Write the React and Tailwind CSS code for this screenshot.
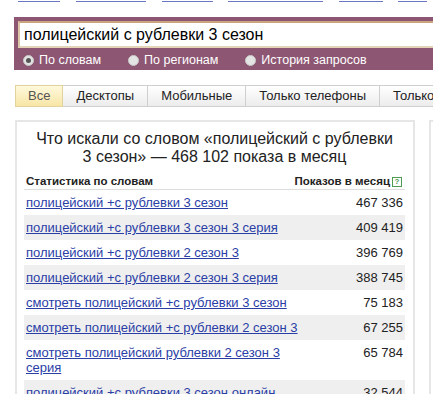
import React from 'react';

const topLinks = [
    { ml: 18, w: 42 },
    { ml: 16, w: 70 },
    { ml: 16, w: 51 },
    { ml: 15, w: 95 },
    { ml: 16, w: 44 },
    { ml: 15, w: 29 },
];

const tabs = ['Все', 'Десктопы', 'Мобильные', 'Только телефоны', 'Только планшеты'];

const rows = [
    ['полицейский +с рублевки 3 сезон', '467 336'],
    ['полицейский +с рублевки 3 сезон 3 серия', '409 419'],
    ['полицейский +с рублевки 2 сезон 3', '396 769'],
    ['полицейский +с рублевки 2 сезон 3 серия', '388 745'],
    ['смотреть полицейский +с рублевки 3 сезон', '75 183'],
    ['смотреть полицейский +с рублевки 2 сезон 3', '67 255'],
    ['смотреть полицейский рублевки 2 сезон 3 серия', '65 784'],
    ['полицейский +с рублевки 3 сезон онлайн', '32 544'],
    ['полицейский +с рублевки 3 сезон смотреть', '31 002'],
];

const Radio = ({ checked, label }) => (
    <div className="flex items-center">
        <span className="w-[11px] h-[11px] rounded-full bg-[#e4e4e4] border border-[#c9c9c9] flex items-center justify-center">
            {checked && <span className="w-[5px] h-[5px] rounded-full bg-[#555]" />}
        </span>
        <span className="ml-[5px] text-[12.5px] text-white leading-[15px]">{label}</span>
    </div>
);

export default function App() {
    return (
        <div className="w-[433px] h-[394px] overflow-hidden bg-white font-['Liberation_Sans',Arial,sans-serif] text-[#222]">
            {/* links cut off at the top */}
            <div className="flex h-[17px]">
                {topLinks.map((l, i) => (
                    <div key={i} className="h-px mt-[1px] bg-[#6a78c4]" style={{ marginLeft: l.ml, width: l.w }} />
                ))}
            </div>

            {/* search block */}
            <div className="ml-[14px] h-[53px] bg-[#8d5672] pt-[4px] pl-[4px] overflow-hidden">
                <div className="w-[500px] h-[27px] bg-white border-t-2 border-l-2 border-b-2 border-t-[#c9a47e] border-l-[#dcc6a8] border-b-[#e5d3b8] flex items-center pl-[4px]">
                    <span className="text-[16px] text-black leading-[20px]">полицейский с рублевки 3 сезон</span>
                </div>
                <div className="flex items-center mt-[5px] pl-[5px]">
                    <Radio checked label="По словам" />
                    <div className="ml-[27px]"><Radio label="По регионам" /></div>
                    <div className="ml-[27px]"><Radio label="История запросов" /></div>
                </div>
            </div>

            {/* tabs */}
            <div className="ml-[15px] mt-[15px] flex h-[22px] whitespace-nowrap">
                {tabs.map((t, i) => (
                    <div
                        key={t}
                        className={
                            'h-[22px] flex items-center text-[13px] text-[#222] border border-[#cfcfcf] shrink-0 ' +
                            (i === 0
                                ? 'px-[12px] bg-gradient-to-b from-[#fff8dc] to-[#f8e6a6] border-[#e2d29c] text-[#555]'
                                : 'px-[13px] border-l-0 bg-gradient-to-b from-[#ffffff] to-[#ececec]')
                        }
                    >
                        {t}
                    </div>
                ))}
            </div>

            {/* panels */}
            <div className="flex mt-[13px] ml-[15px]">
                <div className="w-[400px] shrink-0 border-2 border-[#e6e6e6] pl-[7px] pr-[8px] pt-[8px] h-[400px]">
                    <div className="text-center text-[16px] leading-[18px] text-[#222] whitespace-nowrap">
                        Что искали со словом «полицейский с рублевки
                        <br />
                        3 сезон» — 468 102 показа в месяц
                    </div>
                    <div className="mt-[8px] flex justify-between items-center pl-[2px] pr-[3px] border-b border-[#dddddd] h-[16px] text-[11.5px] font-bold text-[#222]">
                        <span>Статистика по словам</span>
                        <span className="flex items-center">
                            Показов в месяц
                            <span className="ml-[2px] w-[10px] h-[10px] border border-[#4f9b4f] text-[#4f9b4f] text-[8px] leading-[8px] font-bold flex items-center justify-center">?</span>
                        </span>
                    </div>
                    {rows.map(([q, n], i) => (
                        <div key={q} className={'flex justify-between items-start px-[2px] py-[5px] leading-[15px] text-[13px] ' + (i % 2 === 1 ? 'bg-[#efefef]' : '')}>
                            <a href="#" className="w-[290px] text-[#2a3ea6] underline underline-offset-[1px]">{q}</a>
                            <span className="text-[#222]">{n}</span>
                        </div>
                    ))}
                </div>
                <div className="ml-[14px] w-[200px] shrink-0 border-2 border-[#e6e6e6] h-[400px]" />
            </div>
        </div>
    );
}
